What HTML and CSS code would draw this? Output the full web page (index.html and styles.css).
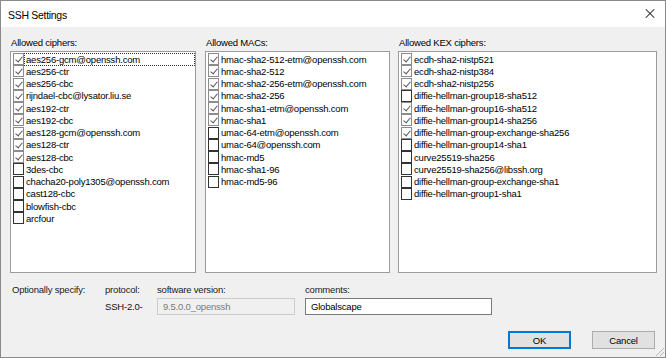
FILE: index.html
```html
<!DOCTYPE html>
<html lang="en">
<head>
    <meta charset="UTF-8">
    <title>SSH Settings</title>
    <link rel="stylesheet" href="styles.css">
</head>
<body>
    <div class="window">
        <div class="titlebar">
            <span class="title">SSH Settings</span>
            <span class="close"></span>
        </div>
        <div class="client">
            <div class="lists">
                <div class="group">
                    <div class="group-label">Allowed ciphers:</div>
                    <div class="listbox">
                        <div class="item focus"><span class="box on"></span><span>aes256-gcm@openssh.com</span></div>
                        <div class="item"><span class="box on"></span><span>aes256-ctr</span></div>
                        <div class="item"><span class="box on"></span><span>aes256-cbc</span></div>
                        <div class="item"><span class="box on"></span><span>rijndael-cbc@lysator.liu.se</span></div>
                        <div class="item"><span class="box on"></span><span>aes192-ctr</span></div>
                        <div class="item"><span class="box on"></span><span>aes192-cbc</span></div>
                        <div class="item"><span class="box on"></span><span>aes128-gcm@openssh.com</span></div>
                        <div class="item"><span class="box on"></span><span>aes128-ctr</span></div>
                        <div class="item"><span class="box on"></span><span>aes128-cbc</span></div>
                        <div class="item"><span class="box"></span><span>3des-cbc</span></div>
                        <div class="item"><span class="box"></span><span>chacha20-poly1305@openssh.com</span></div>
                        <div class="item"><span class="box"></span><span>cast128-cbc</span></div>
                        <div class="item"><span class="box"></span><span>blowfish-cbc</span></div>
                        <div class="item"><span class="box"></span><span>arcfour</span></div>
                    </div>
                </div>
                <div class="group">
                    <div class="group-label">Allowed MACs:</div>
                    <div class="listbox">
                        <div class="item"><span class="box on"></span><span>hmac-sha2-512-etm@openssh.com</span></div>
                        <div class="item"><span class="box on"></span><span>hmac-sha2-512</span></div>
                        <div class="item"><span class="box on"></span><span>hmac-sha2-256-etm@openssh.com</span></div>
                        <div class="item"><span class="box on"></span><span>hmac-sha2-256</span></div>
                        <div class="item"><span class="box on"></span><span>hmac-sha1-etm@openssh.com</span></div>
                        <div class="item"><span class="box on"></span><span>hmac-sha1</span></div>
                        <div class="item"><span class="box"></span><span>umac-64-etm@openssh.com</span></div>
                        <div class="item"><span class="box"></span><span>umac-64@openssh.com</span></div>
                        <div class="item"><span class="box"></span><span>hmac-md5</span></div>
                        <div class="item"><span class="box"></span><span>hmac-sha1-96</span></div>
                        <div class="item"><span class="box"></span><span>hmac-md5-96</span></div>
                    </div>
                </div>
                <div class="group">
                    <div class="group-label">Allowed KEX ciphers:</div>
                    <div class="listbox">
                        <div class="item"><span class="box on"></span><span>ecdh-sha2-nistp521</span></div>
                        <div class="item"><span class="box on"></span><span>ecdh-sha2-nistp384</span></div>
                        <div class="item"><span class="box on"></span><span>ecdh-sha2-nistp256</span></div>
                        <div class="item"><span class="box"></span><span>diffie-hellman-group18-sha512</span></div>
                        <div class="item"><span class="box on"></span><span>diffie-hellman-group16-sha512</span></div>
                        <div class="item"><span class="box on"></span><span>diffie-hellman-group14-sha256</span></div>
                        <div class="item"><span class="box on"></span><span>diffie-hellman-group-exchange-sha256</span></div>
                        <div class="item"><span class="box"></span><span>diffie-hellman-group14-sha1</span></div>
                        <div class="item"><span class="box"></span><span>curve25519-sha256</span></div>
                        <div class="item"><span class="box"></span><span>curve25519-sha256@libssh.org</span></div>
                        <div class="item"><span class="box"></span><span>diffie-hellman-group-exchange-sha1</span></div>
                        <div class="item"><span class="box"></span><span>diffie-hellman-group1-sha1</span></div>
                    </div>
                </div>
            </div>

            <div class="specify">
                <div class="label">Optionally specify:</div>
                <div class="label">protocol:</div>
                <div class="label">software version:</div>
                <div class="label">comments:</div>
                <div></div>
                <div class="proto">SSH-2.0-</div>
                <div class="field disabled">9.5.0.0_openssh</div>
                <div class="field wide">Globalscape</div>
            </div>

            <div class="buttons">
                <button class="btn default">OK</button>
                <button class="btn">Cancel</button>
            </div>
            <span class="grip"></span>
        </div>
    </div>
</body>
</html>
```

FILE: styles.css
```css
body {
    margin: 0;
    font-family: 'Liberation Sans', Arial, sans-serif;
    font-size: 9.5px;
    letter-spacing: -0.2px;
    color: #000;
}
.window {
    width: 666px;
    height: 358px;
    box-sizing: border-box;
    border: 1px solid #8a8a8a;
    background: #f0f0f0;
    display: flex;
    flex-direction: column;
}
.titlebar {
    height: 26px;
    background: #fff;
    display: flex;
    align-items: center;
    justify-content: space-between;
    padding: 0 8px 0 7px;
}
.title {
    font-size: 10.5px;
    letter-spacing: -0.3px;
    margin-top: 1px;
}
.close {
    position: relative;
    width: 10px;
    height: 10px;
    margin-right: 2px;
}
.close::before,
.close::after {
    content: "";
    position: absolute;
    left: -1px;
    top: 4px;
    width: 12px;
    height: 1px;
    background: #222;
    transform: rotate(45deg);
}
.close::after {
    transform: rotate(-45deg);
}
.client {
    flex: 1;
    position: relative;
    padding: 0 9px;
}
.lists {
    display: grid;
    grid-template-columns: 186px 185px 258px;
    column-gap: 9px;
    padding-top: 10px;
}
.lists .group:last-child {
    margin-left: -1px;
}
.group-label {
    height: 14px;
    line-height: 12px;
    padding-left: 1px;
}
.listbox {
    height: 222px;
    box-sizing: border-box;
    border: 1px solid #9c9c9c;
    background: #fff;
    padding: 1px 1px 0 2px;
}
.item {
    height: 12.25px;
    display: flex;
    align-items: center;
    white-space: nowrap;
}
.item span:last-child {
    padding: 0 1px;
    line-height: 11px;
}
.item.focus span:last-child {
    flex: 1;
    outline: 1px dotted #333;
    outline-offset: 0;
}
.box {
    position: relative;
    flex: none;
    width: 11px;
    height: 12px;
    box-sizing: border-box;
    border: 1px solid #333;
    background: #fff;
    margin-right: 1px;
}
.box.on {
    border-color: #8c8c8c;
}
.box.on::after {
    content: "";
    position: absolute;
    left: 3px;
    top: 1px;
    width: 3px;
    height: 6px;
    border-right: 1px solid #555;
    border-bottom: 1px solid #555;
    transform: rotate(40deg);
}
.specify {
    display: grid;
    grid-template-columns: 93px 52px 148px 188px;
    grid-template-rows: 14px 17px;
    row-gap: 2px;
    padding: 9px 0 0 2px;
    align-items: center;
}
.label {
    color: #222;
}
.proto {
    color: #111;
}
.field {
    height: 17px;
    box-sizing: border-box;
    border: 1px solid #7a7a7a;
    background: #fff;
    padding: 0 5px;
    line-height: 15px;
    width: 187px;
}
.field.disabled {
    width: 138px;
    border-color: #cccccc;
    background: #f0f0f0;
    color: #7a7a7a;
}
.buttons {
    display: flex;
    justify-content: flex-end;
    gap: 21px;
    padding: 16px 1px 0 0;
}
.btn {
    width: 63px;
    height: 18px;
    box-sizing: border-box;
    border: 1px solid #adadad;
    background: #e1e1e1;
    font-family: inherit;
    font-size: 9.5px;
    letter-spacing: -0.2px;
    padding: 0;
    color: #000;
}
.btn.default {
    border-color: #0078d7;
    box-shadow: inset 0 0 0 1px #0078d7;
    border-width: 1px;
}
.grip {
    position: absolute;
    right: 1px;
    bottom: 1px;
    width: 10px;
    height: 10px;
    background: repeating-linear-gradient(135deg, transparent 0 2px, #b8b8b8 2px 3px);
    clip-path: polygon(100% 0, 100% 100%, 0 100%);
}
```
